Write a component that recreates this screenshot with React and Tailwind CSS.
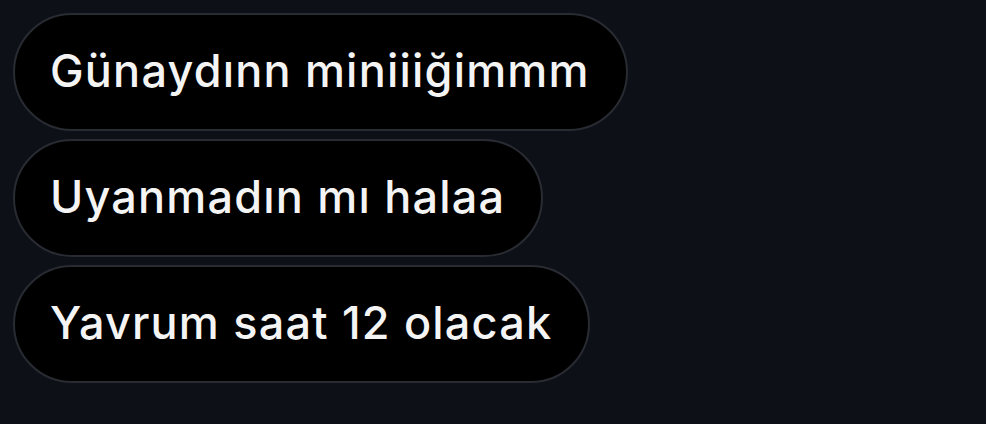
import React from 'react';

const messages = ['Günaydınn miniiiğimmm', 'Uyanmadın mı halaa', 'Yavrum saat 12 olacak'];

const Bubble = ({ text }) => (
  <div className="self-start h-[118px] flex items-center rounded-full bg-black border-2 border-[#282c32] pl-[35px] pr-[36px]">
    <span className="text-[45px] font-[550] text-[#f4f4f4] tracking-[1.2px] leading-none -mt-[4px]">{text}</span>
  </div>
);

export default function App() {
  return (
    <div
      className="w-[986px] h-[424px] bg-[#0d1117] overflow-hidden flex flex-col gap-[8px] pl-[13px] pt-[13px]"
      style={{ fontFamily: 'Inter, "Noto Sans", sans-serif' }}
    >
      {messages.map((m) => (
        <Bubble key={m} text={m} />
      ))}
    </div>
  );
}
